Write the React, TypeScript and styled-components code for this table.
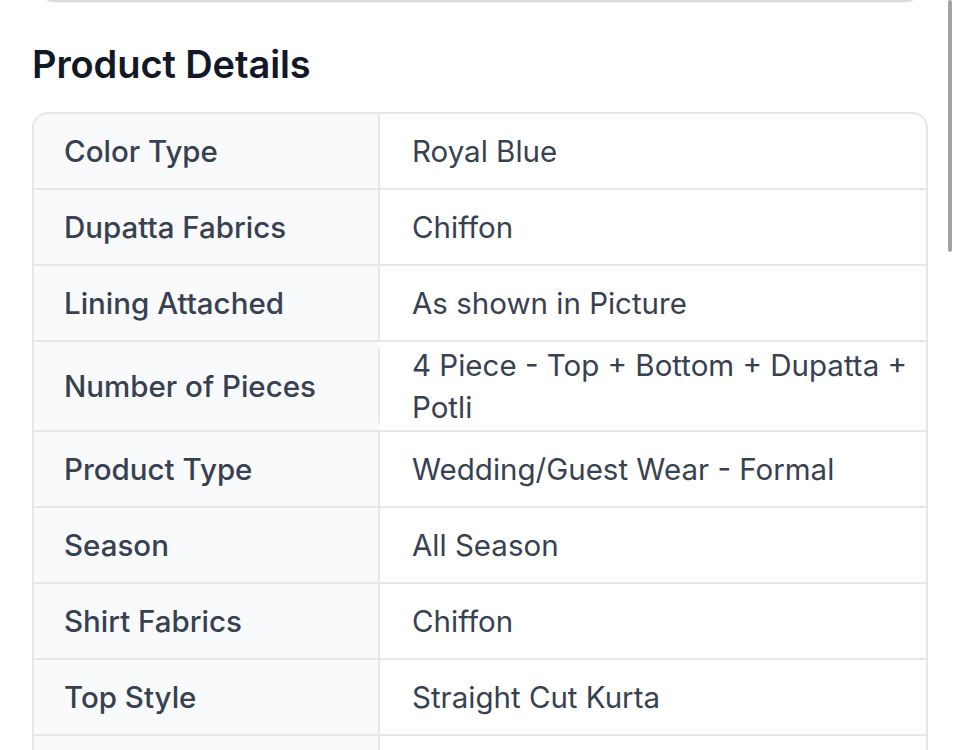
import React from "react";
import styled, { createGlobalStyle } from "styled-components";

const Global = createGlobalStyle`
  *, *::before, *::after { box-sizing: border-box; }
  html, body { margin: 0; padding: 0; background: #ffffff; }
  body { font-family: Inter, "Noto Sans", sans-serif; color: #374151; overflow: hidden; }
`;

const Page = styled.div`
  position: relative;
  height: 750px;
  overflow: hidden;
  padding: 0 32px;
`;

const PrevCard = styled.div`
  margin: -60px 8px 0 8px;
  height: 62px;
  border: 2px solid #d9dbe0;
  border-top: none;
  border-radius: 0 0 14px 14px;
  box-shadow: 0 1px 2px rgba(0, 0, 0, 0.05);
`;

const Title = styled.h2`
  margin: 38px 0 0 0;
  font-size: 38px;
  line-height: 48px;
  font-weight: 600;
  color: #111827;
  letter-spacing: -0.1px;
`;

const Table = styled.div`
  margin-top: 24px;
  border: 2px solid #e5e7eb;
  border-radius: 16px;
  overflow: hidden;
`;

const Row = styled.div`
  display: flex;
  align-items: stretch;
  & + & {
    border-top: 2px solid #e5e7eb;
  }
`;

const LabelCell = styled.div`
  flex: 0 0 346px;
  background: #f9fafb;
  display: flex;
  align-items: center;
`;

const LabelInner = styled.div`
  flex: 1;
  min-height: 74px;
  display: flex;
  align-items: center;
  padding-left: 30px;
  border-right: 2px solid #e5e7eb;
  font-size: 29.5px;
  font-weight: 500;
  color: #374151;
`;

const ValueCell = styled.div`
  flex: 1;
  display: flex;
  align-items: center;
  min-height: 74px;
  padding: 2px 12px 2px 32px;
  font-size: 29.5px;
  line-height: 42px;
  font-weight: 400;
  color: #374151;
`;

const Scrollbar = styled.div`
  position: absolute;
  top: 0;
  right: 8px;
  width: 4px;
  height: 252px;
  border-radius: 2px;
  background: #a3a3a3;
`;

const rows: [string, string][] = [
  ["Color Type", "Royal Blue"],
  ["Dupatta Fabrics", "Chiffon"],
  ["Lining Attached", "As shown in Picture"],
  ["Number of Pieces", "4 Piece - Top + Bottom + Dupatta + Potli"],
  ["Product Type", "Wedding/Guest Wear - Formal"],
  ["Season", "All Season"],
  ["Shirt Fabrics", "Chiffon"],
  ["Top Style", "Straight Cut Kurta"],
  ["", ""],
];

export default function App() {
  return (
    <>
      <Global />
      <Page>
        <PrevCard />
        <Title>Product Details</Title>
        <Table>
          {rows.map(([label, value], i) => (
            <Row key={i}>
              <LabelCell>
                <LabelInner>{label}</LabelInner>
              </LabelCell>
              <ValueCell>{value}</ValueCell>
            </Row>
          ))}
        </Table>
        <Scrollbar />
      </Page>
    </>
  );
}
